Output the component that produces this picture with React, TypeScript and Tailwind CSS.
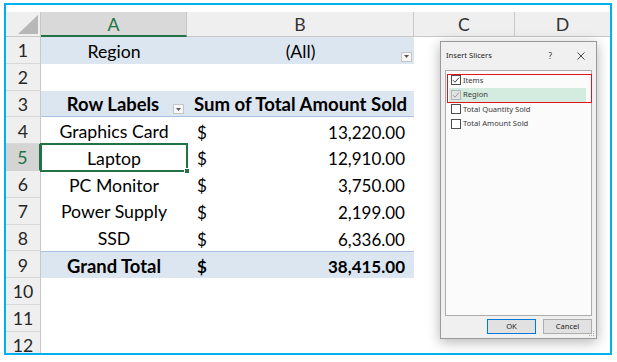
import React from 'react'

type Row = {
  n: number
  kind?: 'filter' | 'head' | 'item' | 'total'
  label?: string
  amount?: string
}

const rows: Row[] = [
  { n: 1, kind: 'filter' },
  { n: 2 },
  { n: 3, kind: 'head' },
  { n: 4, kind: 'item', label: 'Graphics Card', amount: '13,220.00' },
  { n: 5, kind: 'item', label: 'Laptop', amount: '12,910.00' },
  { n: 6, kind: 'item', label: 'PC Monitor', amount: '3,750.00' },
  { n: 7, kind: 'item', label: 'Power Supply', amount: '2,199.00' },
  { n: 8, kind: 'item', label: 'SSD', amount: '6,336.00' },
  { n: 9, kind: 'total', label: 'Grand Total', amount: '38,415.00' },
  { n: 10 },
  { n: 11 },
  { n: 12 },
]

const fields = [
  { name: 'Items', checked: true, disabled: false, active: false },
  { name: 'Region', checked: true, disabled: true, active: true },
  { name: 'Total Quantity Sold', checked: false, disabled: false, active: false },
  { name: 'Total Amount Sold', checked: false, disabled: false, active: false },
]

const DropButton = ({ pos }: { pos: string }) => (
  <span className={`absolute ${pos} flex h-[10px] w-[11px] items-center justify-center border border-[#c6c6c6] bg-[#f6f6f6]`}>
    <svg width="5" height="3" viewBox="0 0 5 3">
      <path d="M0 0h5L2.5 3z" fill="#595959" />
    </svg>
  </span>
)

const CheckBox = ({ checked, disabled }: { checked: boolean; disabled: boolean }) => (
  <span
    className={
      disabled
        ? 'flex h-[10px] w-[10px] shrink-0 items-center justify-center border border-[#b5b5b5] bg-[#e3e3e3]'
        : 'flex h-[10px] w-[10px] shrink-0 items-center justify-center border border-[#4d4d4d] bg-white'
    }
  >
    {checked && (
      <svg width="8" height="8" viewBox="0 0 8 8">
        <path d="M1 4.2l2 2L7 1.6" fill="none" stroke={disabled ? '#9a9a9a' : '#444'} strokeWidth="1" />
      </svg>
    )}
  </span>
)

function SheetRow({ row }: { row: Row }) {
  const selected = row.n === 5
  const filled = row.kind === 'filter' || row.kind === 'head' || row.kind === 'total'
  const bold = row.kind === 'head' || row.kind === 'total'

  return (
    <div className="flex h-[26.8px] shrink-0">
      <div
        className={
          selected
            ? 'flex w-[35px] shrink-0 items-center justify-center border-b border-r-2 border-b-[#d0d0d0] border-r-[#217346] bg-[#d4d4d4] pt-[3px] text-[#217346]'
            : 'flex w-[35px] shrink-0 items-center justify-center border-b border-r border-b-[#d8d8d8] border-r-[#c8c8c8] bg-[#efefef] pt-[3px] text-[#262626]'
        }
      >
        {row.n}
      </div>

      <div
        className={`relative flex w-[146px] shrink-0 items-center justify-center pt-[3px] ${filled ? 'bg-[#dce6f1]' : ''} ${
          row.kind === 'head' ? 'border-b border-[#a9c1e0]' : ''
        } ${row.kind === 'total' ? 'border-t border-[#a9c1e0]' : ''} ${bold ? 'text-[18.4px] font-bold' : ''}`}
      >
        {row.kind === 'filter' && 'Region'}
        {row.kind === 'head' && <span className="pr-[2px]">Row Labels</span>}
        {row.kind === 'head' && <DropButton pos="right-[3px] bottom-[2px]" />}
        {(row.kind === 'item' || row.kind === 'total') && row.label}
        {selected && (
          <span className="absolute inset-[-1px] border-2 border-[#217346]">
            <span className="absolute -bottom-[4px] -right-[4px] h-[6px] w-[6px] border border-white bg-[#217346]" />
          </span>
        )}
      </div>

      <div
        className={`relative flex w-[227px] shrink-0 items-center pt-[3px] ${filled ? 'bg-[#dce6f1]' : ''} ${
          row.kind === 'head' ? 'border-b border-[#a9c1e0]' : ''
        } ${row.kind === 'total' ? 'border-t border-[#a9c1e0]' : ''} ${bold ? 'font-bold' : ''}`}
      >
        {row.kind === 'filter' && (
          <>
            <span className="w-full text-center">(All)</span>
            <DropButton pos="right-[2px] bottom-[2px]" />
          </>
        )}
        {row.kind === 'head' && <span className="w-full text-center text-[18.6px]">Sum of Total Amount Sold</span>}
        {row.amount && (
          <span className="flex w-full justify-between pl-[10px] pr-[9px] text-[17px]">
            <span>$</span>
            <span>{row.amount}</span>
          </span>
        )}
      </div>

      <div className="w-[101px] shrink-0" />
      <div className="flex-1" />
    </div>
  )
}

function SlicerDialog() {
  return (
    <div className="absolute left-[440px] top-[41px] flex h-[298px] w-[157px] flex-col border border-[#9a9a9a] bg-[#f0f0f0] px-[4px] shadow-[0_3px_12px_rgba(0,0,0,0.3)] font-['Noto_Sans',sans-serif] text-[7.6px] text-[#222]">
      <div className="flex h-[28px] shrink-0 items-center">
        <span className="flex-1 pl-[1px]">Insert Slicers</span>
        <span className="mr-[25px] text-[8px] text-[#333]">?</span>
        <svg width="8" height="8" viewBox="0 0 8 8" className="mr-[7px]">
          <path d="M0.5 0.5l7 7M7.5 0.5l-7 7" stroke="#333" strokeWidth="0.9" />
        </svg>
      </div>

      <div className="relative h-[246px] shrink-0 border border-[#acacac] bg-[#fbfbfb] pt-[2px]">
        {fields.map((f) => (
          <div
            key={f.name}
            className={`ml-[3px] mr-[5px] flex h-[14.5px] items-center gap-[2px] pl-[2px] ${f.active ? 'bg-[#d4ecdf]' : ''}`}
          >
            <CheckBox checked={f.checked} disabled={f.disabled} />
            <span className="text-[#3a3a3a]">{f.name}</span>
          </div>
        ))}
        <div className="absolute left-[1px] top-[3px] h-[29px] w-[145px] border-[1.5px] border-[#e3121b]" />
      </div>

      <div className="mt-[3px] flex justify-end gap-[7px]">
        <button className="flex h-[15px] w-[49px] items-center justify-center border border-[#0078d7] bg-[#e1e1e1] text-[#222]">
          OK
        </button>
        <button className="flex h-[15px] w-[49px] items-center justify-center border border-[#adadad] bg-[#e1e1e1] text-[#222]">
          Cancel
        </button>
      </div>

      <svg width="6" height="6" viewBox="0 0 6 6" className="absolute bottom-[1px] right-[1px]">
        <rect x="4" y="0" width="1" height="1" fill="#b0b0b0" />
        <rect x="2" y="2" width="1" height="1" fill="#b0b0b0" />
        <rect x="4" y="2" width="1" height="1" fill="#b0b0b0" />
        <rect x="0" y="4" width="1" height="1" fill="#b0b0b0" />
        <rect x="2" y="4" width="1" height="1" fill="#b0b0b0" />
        <rect x="4" y="4" width="1" height="1" fill="#b0b0b0" />
      </svg>
    </div>
  )
}

export default function App() {
  return (
    <div className="relative h-[362px] w-[617px] overflow-hidden bg-white font-['Lato',sans-serif] text-[17.7px] text-black">
      <div className="ml-[4px] mt-[3px] h-[352px] w-[608px] overflow-hidden border-2 border-[#00b0f0] pt-[7px]">
        {/* column headers */}
        <div className="flex h-[25px] text-[#333]">
          <div className="relative w-[35px] shrink-0 border-b border-r border-[#c8c8c8] bg-[#efefef]">
            <svg width="20" height="19" viewBox="0 0 20 19" className="absolute bottom-[2px] right-[2px]">
              <path d="M20 0V19H0z" fill="#b7b7b7" />
            </svg>
          </div>
          <div className="flex w-[146px] shrink-0 items-center justify-center border-b-2 border-r border-b-[#217346] border-r-[#c8c8c8] bg-[#d9d9d9] pt-[4px] text-[#217346]">
            A
          </div>
          <div className="flex w-[227px] shrink-0 items-center justify-center border-b border-r border-[#c8c8c8] bg-[#efefef] pt-[3px]">
            B
          </div>
          <div className="flex w-[101px] shrink-0 items-center justify-center border-b border-r border-[#c8c8c8] bg-[#efefef] pt-[3px]">
            C
          </div>
          <div className="flex flex-1 items-center justify-center border-b border-[#c8c8c8] bg-[#efefef] pt-[3px]">D</div>
        </div>

        {rows.map((r) => (
          <SheetRow key={r.n} row={r} />
        ))}
      </div>

      <SlicerDialog />
    </div>
  )
}
